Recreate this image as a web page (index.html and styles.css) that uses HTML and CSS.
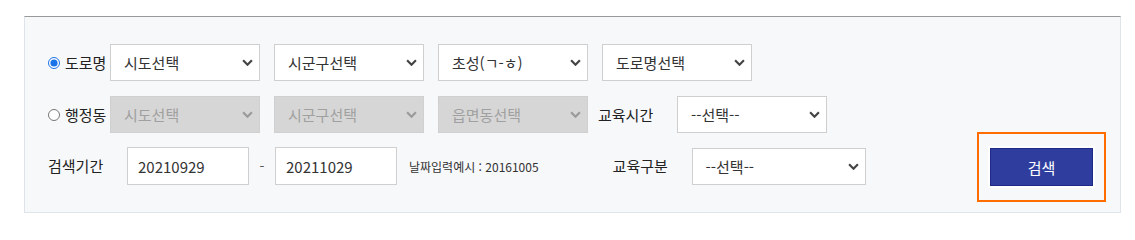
FILE: index.html
```html
<!DOCTYPE html>
<html lang="ko">
<head>
<meta charset="utf-8">
<title>검색</title>
<link rel="stylesheet" href="styles.css">
</head>
<body>
<div class="search-box">
  <div class="rows">
    <div class="row">
      <label class="lab"><input type="radio" name="addr" checked><span>도로명</span></label>
      <div class="sel"><select><option>시도선택</option></select><svg class="chev" viewBox="0 0 10 6"><path d="M1 1 L5 5 L9 1"/></svg></div>
      <div class="sel"><select><option>시군구선택</option></select><svg class="chev" viewBox="0 0 10 6"><path d="M1 1 L5 5 L9 1"/></svg></div>
      <div class="sel"><select><option>초성(ㄱ-ㅎ)</option></select><svg class="chev" viewBox="0 0 10 6"><path d="M1 1 L5 5 L9 1"/></svg></div>
      <div class="sel"><select><option>도로명선택</option></select><svg class="chev" viewBox="0 0 10 6"><path d="M1 1 L5 5 L9 1"/></svg></div>
    </div>
    <div class="row">
      <label class="lab"><input type="radio" name="addr"><span>행정동</span></label>
      <div class="sel dis"><select disabled><option>시도선택</option></select><svg class="chev" viewBox="0 0 10 6"><path d="M1 1 L5 5 L9 1"/></svg></div>
      <div class="sel dis"><select disabled><option>시군구선택</option></select><svg class="chev" viewBox="0 0 10 6"><path d="M1 1 L5 5 L9 1"/></svg></div>
      <div class="sel dis"><select disabled><option>읍면동선택</option></select><svg class="chev" viewBox="0 0 10 6"><path d="M1 1 L5 5 L9 1"/></svg></div>
      <span class="flabel flabel-time">교육시간</span>
      <div class="sel"><select><option>--선택--</option></select><svg class="chev" viewBox="0 0 10 6"><path d="M1 1 L5 5 L9 1"/></svg></div>
    </div>
    <div class="row">
      <span class="lab plain">검색기간</span>
      <input class="date" type="text" value="20210929">
      <span class="dash">-</span>
      <input class="date" type="text" value="20211029">
      <span class="hint">날짜입력예시 : 20161005</span>
      <span class="flabel flabel-kind">교육구분</span>
      <div class="sel wide"><select><option>--선택--</option></select><svg class="chev" viewBox="0 0 10 6"><path d="M1 1 L5 5 L9 1"/></svg></div>
    </div>
  </div>
  <div class="btn-focus"><button class="btn" type="button">검색</button></div>
</div>
</body>
</html>
```

FILE: styles.css
```css
html, body {
  margin: 0;
  padding: 0;
  background: #ffffff;
}
body {
  font-family: "Noto Sans CJK KR", "Noto Sans", "Liberation Sans", sans-serif;
  font-size: 15px;
  color: #333333;
}
.search-box {
  box-sizing: border-box;
  margin: 16px 0 0 24px;
  width: 1097px;
  height: 197px;
  background: #f7f8fa;
  border-top: 1px solid #999999;
  border-left: 1px solid #dfe3ea;
  border-right: 1px solid #dfe3ea;
  border-bottom: 1px solid #dfe3ea;
  padding: 27px 14px 10px 23px;
  display: flex;
  justify-content: space-between;
  align-items: flex-end;
}
.rows {
  display: flex;
  flex-direction: column;
  gap: 14px;
  align-self: flex-start;
}
.row {
  display: flex;
  align-items: center;
  height: 37px;
}
.row + .row {
  margin-top: 1px;
}
.row:last-child {
  margin-top: 0;
  height: 38px;
}
.lab {
  width: 62px;
  display: flex;
  align-items: center;
  font-size: 15px;
  color: #222;
  white-space: nowrap;
  line-height: 20px;
}
.lab.plain {
  width: 79px;
}
.lab input[type="radio"] {
  width: 12px;
  height: 12px;
  margin: 0 5px 0 0;
  accent-color: #1a73e8;
}
.sel {
  position: relative;
  width: 150px;
  height: 37px;
  margin-right: 14px;
}
.sel.wide {
  width: 174px;
  margin-right: 0;
}
.sel select {
  appearance: none;
  -webkit-appearance: none;
  box-sizing: border-box;
  width: 100%;
  height: 100%;
  border: 1px solid #cfcfcf;
  background: #ffffff;
  border-radius: 0;
  padding: 0 30px 0 13px;
  font-family: inherit;
  font-size: 15px;
  color: #333333;
  outline: none;
}
.sel.dis select {
  background: #d6d6d6;
  border-color: #d0d0d0;
  color: #a0a0a0;
  opacity: 1;
}
.chev {
  position: absolute;
  right: 7px;
  top: 15px;
  width: 11px;
  height: 7px;
  fill: none;
  stroke: #444444;
  stroke-width: 2;
  pointer-events: none;
}
.sel.dis .chev {
  stroke: #9a9a9a;
}
.flabel {
  font-size: 15px;
  color: #222;
  line-height: 20px;
  white-space: nowrap;
}
.flabel-time {
  margin-left: -4px;
  width: 79px;
}
.flabel-kind {
  margin-left: 74px;
  width: 79px;
}
.date {
  box-sizing: border-box;
  width: 122px;
  height: 38px;
  border: 1px solid #cfcfcf;
  background: #ffffff;
  padding: 0 10px;
  font-family: inherit;
  font-size: 15px;
  color: #333333;
  outline: none;
  border-radius: 0;
}
.dash {
  width: 26px;
  text-align: center;
  color: #555;
  font-size: 14px;
}
.hint {
  margin-left: 12px;
  font-size: 12px;
  color: #333;
  white-space: nowrap;
}
.btn-focus {
  border: 2px solid #ff6c00;
  padding: 14px 11px;
}
.btn {
  display: block;
  box-sizing: border-box;
  width: 103px;
  height: 38px;
  background: #2f3e9e;
  border: 1px solid #1d2a88;
  color: #ffffff;
  font-family: inherit;
  font-size: 15px;
  border-radius: 0;
  box-shadow: 0 0 0 2px #ffffff;
  cursor: pointer;
}
```
